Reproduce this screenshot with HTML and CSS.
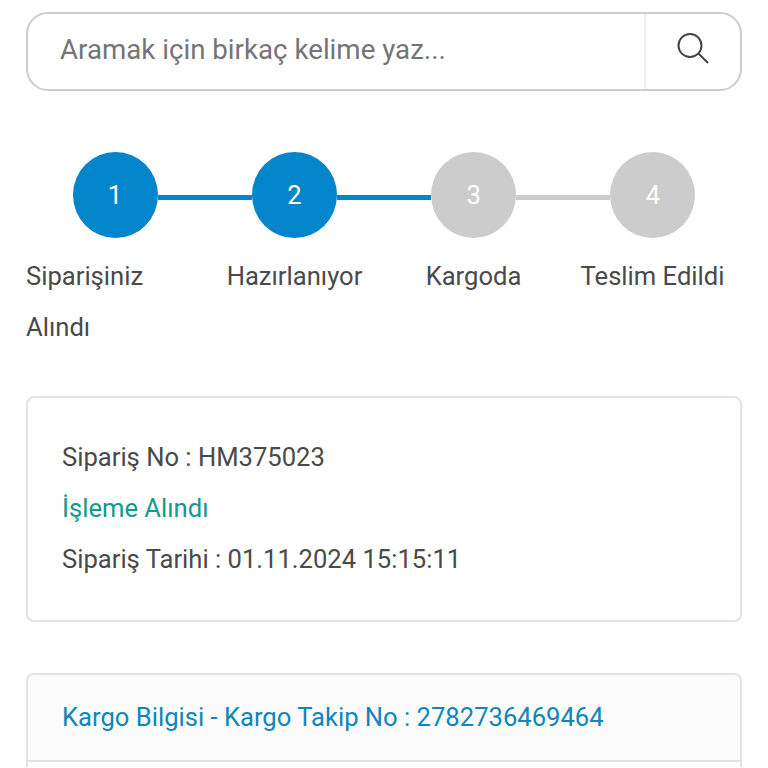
FILE: index.html
```html
<!DOCTYPE html>
<html lang="tr">
<head>
<meta charset="utf-8">
<title>Sipariş Takibi</title>
<link rel="stylesheet" href="styles.css">
</head>
<body>
<div class="page">
  <form class="search">
    <div class="search-text">Aramak için birkaç kelime yaz...</div>
    <div class="search-btn">
      <svg class="search-icon" viewBox="0 0 34 34" width="34" height="34" aria-hidden="true">
        <circle cx="14" cy="13.5" r="11.5" fill="none" stroke="#444" stroke-width="2"/>
        <path d="M22.5 21.5 L32 31" fill="none" stroke="#444" stroke-width="2"/>
      </svg>
    </div>
  </form>

  <div class="track">
    <div class="dot on">1</div>
    <div class="bar on"></div>
    <div class="dot on">2</div>
    <div class="bar on"></div>
    <div class="dot">3</div>
    <div class="bar"></div>
    <div class="dot">4</div>
  </div>
  <div class="labels">
    <div class="label first">Siparişiniz Alındı</div>
    <div class="label">Hazırlanıyor</div>
    <div class="label">Kargoda</div>
    <div class="label">Teslim Edildi</div>
  </div>

  <section class="card order">
    <div>Sipariş No : HM375023</div>
    <div class="status">İşleme Alındı</div>
    <div>Sipariş Tarihi : 01.11.2024 15:15:11</div>
  </section>

  <section class="card cargo">
    <div class="cargo-head">Kargo Bilgisi - Kargo Takip No : 2782736469464</div>
    <div class="cargo-body"></div>
  </section>
</div>
</body>
</html>
```
FILE: styles.css
```css
html, body {
  margin: 0;
  padding: 0;
  height: 768px;
  overflow: hidden;
  background: #fff;
}
.page {
  padding: 12px 26px 0;
  font-family: Roboto, "Liberation Sans", sans-serif;
  font-size: 25.6px;
  line-height: 51px;
  color: #4a4a4a;
}
.search {
  display: flex;
  height: 79px;
  box-sizing: border-box;
  border: 2px solid #ccc;
  border-radius: 22px;
  background: #fff;
}
.search-text {
  flex: 1;
  padding-left: 32px;
  line-height: 72px;
  font-size: 27.7px;
  color: #757575;
}
.search-btn {
  width: 94px;
  display: flex;
  align-items: center;
  justify-content: center;
  border-left: 2px solid #eee;
}
.search-icon {
  margin-bottom: 5px;
}
.track {
  display: flex;
  align-items: center;
  margin-top: 61px;
  padding: 0 46.5px;
}
.dot {
  flex: none;
  width: 85px;
  height: 86px;
  border-radius: 50%;
  background: #ccc;
  color: #fff;
  display: flex;
  align-items: center;
  justify-content: center;
}
.dot.on { background: #0285cb; }
.bar {
  flex: 1;
  height: 5px;
  margin-top: 4px;
  background: #ccc;
}
.bar.on { background: #0285cb; }
.labels {
  display: grid;
  grid-template-columns: repeat(4, 1fr);
  margin-top: 13px;
  text-align: center;
}
.label.first {
  text-align: left;
  padding-right: 40px;
}
.card {
  box-sizing: border-box;
  border: 2px solid #e2e2e2;
  border-radius: 8px;
}
.order {
  margin-top: 43px;
  padding: 34px 34px 35px;
}
.status { color: #139a8c; }
.cargo {
  margin-top: 51px;
  height: 94px;
  border-bottom: 0;
  border-radius: 8px 8px 0 0;
}
.cargo-head {
  height: 87px;
  box-sizing: border-box;
  padding: 17px 34px 0;
  background: #fbfbfb;
  border-bottom: 2px solid #e2e2e2;
  border-radius: 6px 6px 0 0;
  color: #0f86bd;
}
```
